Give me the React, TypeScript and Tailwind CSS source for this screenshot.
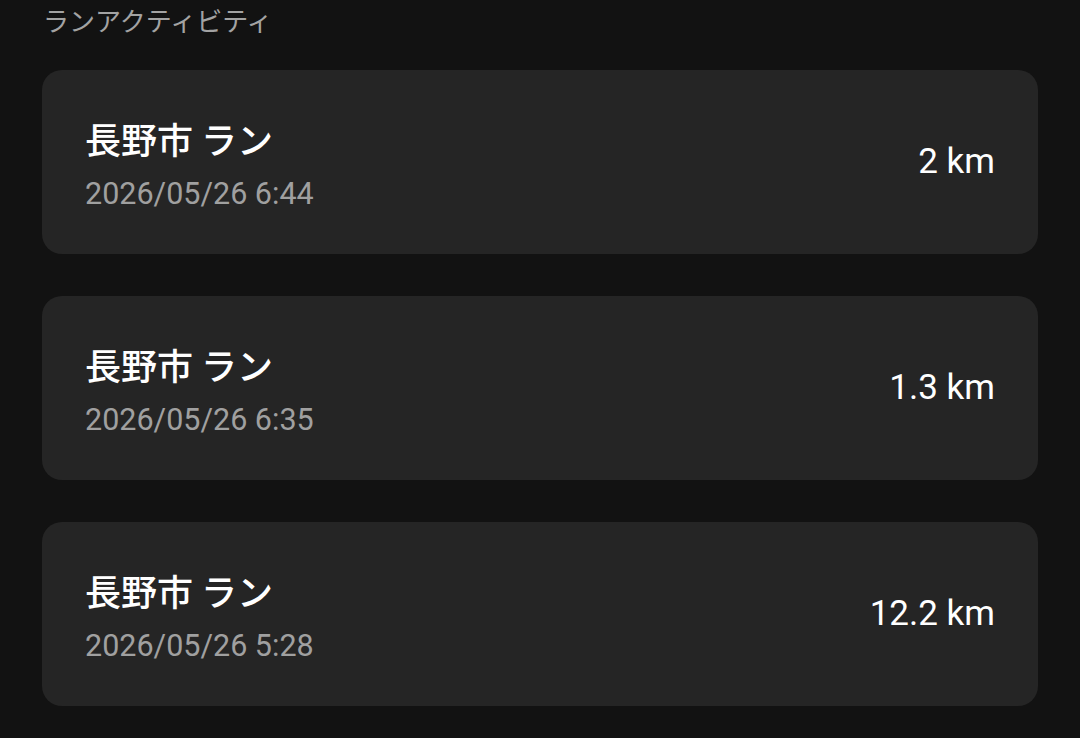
const runs = [
  { title: "長野市 ラン", date: "2026/05/26 6:44", distance: "2 km" },
  { title: "長野市 ラン", date: "2026/05/26 6:35", distance: "1.3 km" },
  { title: "長野市 ラン", date: "2026/05/26 5:28", distance: "12.2 km" },
];

export default function App() {
  return (
    <div className="min-h-[738px] w-full bg-[#121212] px-[42px] font-['Roboto','Noto_Sans_CJK_JP',sans-serif]">
      <div className="pl-[1px] pt-[4px] text-[26px] leading-[32px] text-[#a3a3a3] font-['Noto_Sans_CJK_JP',sans-serif]">
        ランアクティビティ
      </div>
      <div className="mt-[34px] flex flex-col gap-[42px]">
        {runs.map((run, i) => (
          <div
            key={i}
            className="flex h-[184px] items-center justify-between rounded-[20px] bg-[#252525] px-[43px]"
          >
            <div className="flex flex-col pt-[3px]">
              <div className="text-[36px] leading-[44px] font-medium text-white font-['Noto_Sans_CJK_JP',sans-serif]">
                {run.title}
              </div>
              <div className="mt-[16px] text-[30.5px] leading-[36px] text-[#a0a0a0] font-['Roboto',sans-serif]">
                {run.date}
              </div>
            </div>
            <div className="text-[35px] leading-[40px] text-white font-['Roboto',sans-serif]">
              {run.distance}
            </div>
          </div>
        ))}
      </div>
    </div>
  );
}
